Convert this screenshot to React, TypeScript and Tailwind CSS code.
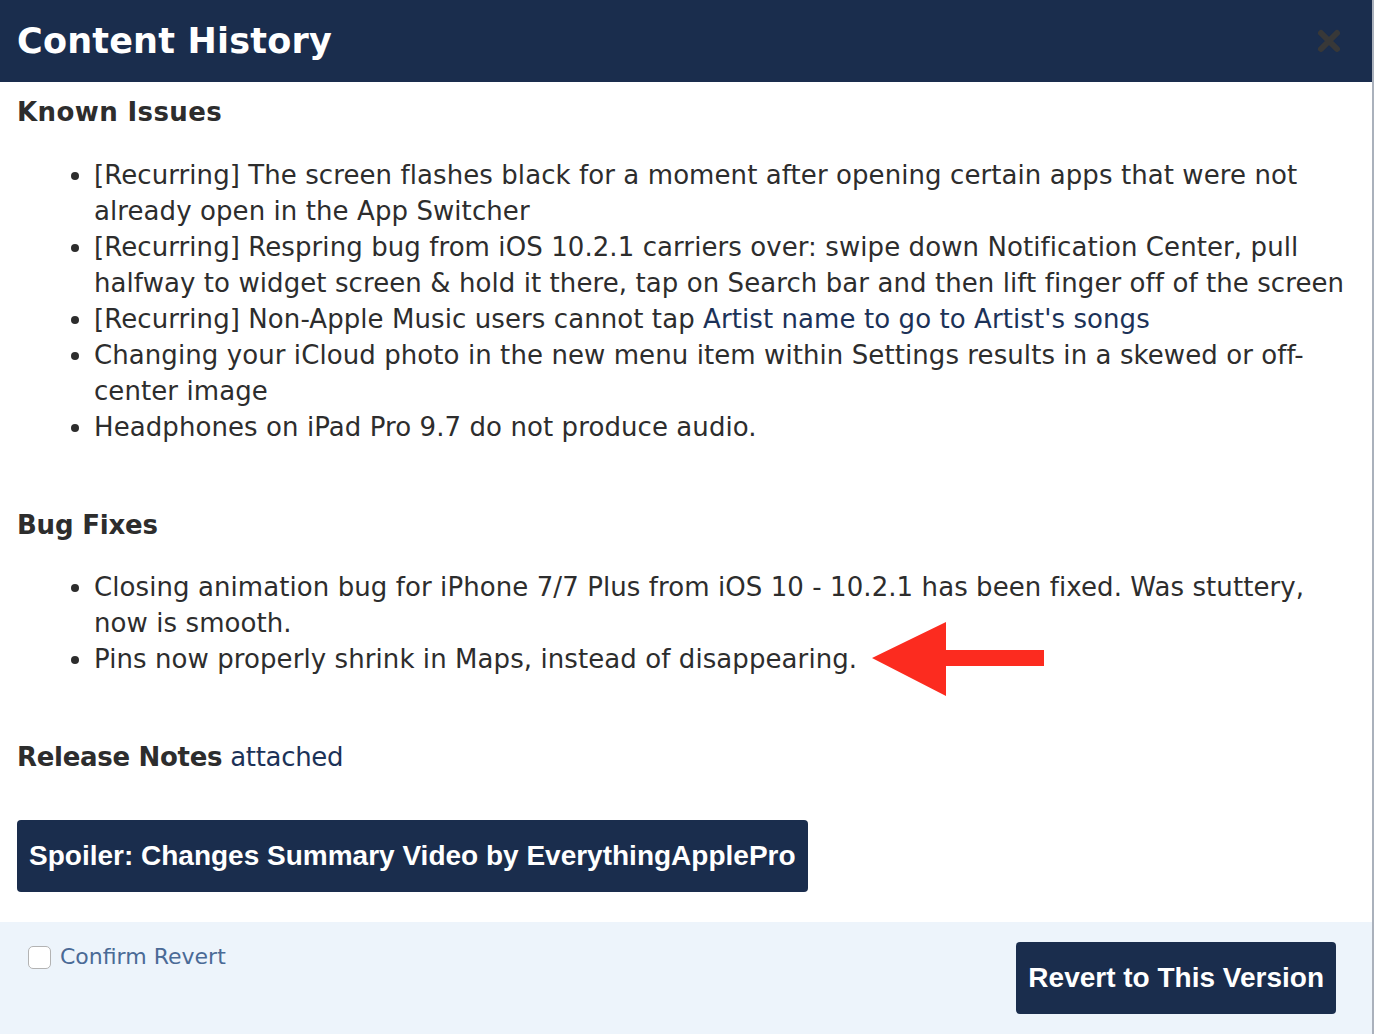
import { useState } from 'react';

const knownIssues = [
  '[Recurring] The screen flashes black for a moment after opening certain apps that were not already open in the App Switcher',
  '[Recurring] Respring bug from iOS 10.2.1 carriers over: swipe down Notification Center, pull halfway to widget screen & hold it there, tap on Search bar and then lift finger off of the screen',
];

function RedArrow() {
  return (
    <svg
      className="absolute left-full top-1/2 ml-[15px] -translate-y-1/2"
      width="172"
      height="74"
      viewBox="0 0 172 74"
    >
      <polygon points="0,36 74,0 74,28 172,28 172,44 74,44 74,74" fill="#fc2b1f" />
    </svg>
  );
}

export default function App() {
  const [confirmed, setConfirmed] = useState(false);

  return (
    <div className="flex min-h-screen bg-white">
      <div className="flex w-[1372px] flex-col font-['DejaVu_Sans',Verdana,sans-serif] text-[#2d2d2d]">
        {/* Cabecera */}
        <div className="flex h-[82px] items-center justify-between bg-[#1a2d4d] pl-[17px] pr-[30px]">
          <h1 className="text-[35px] font-bold leading-none tracking-[0.2px] text-white">Content History</h1>
          <button className="text-[#383838]">
            <svg width="26" height="26" viewBox="0 0 26 26">
              <path d="M5 5 L21 21 M21 5 L5 21" stroke="currentColor" strokeWidth="6" strokeLinecap="round" />
            </svg>
          </button>
        </div>

        {/* Contenido */}
        <div className="px-[17px] pt-[12px] text-[26px] leading-[36px] tracking-[0.08px]">
          <h3 className="font-bold tracking-[0.4px]">Known Issues</h3>
          <ul className="mt-[27px] list-disc pl-[77px]">
            {knownIssues.map((item) => (
              <li key={item}>{item}</li>
            ))}
            <li>
              [Recurring] Non-Apple Music users cannot tap{' '}
              <a className="text-[#1c3258]">Artist name to go to Artist's songs</a>
            </li>
            <li>Changing your iCloud photo in the new menu item within Settings results in a skewed or off-center image</li>
            <li>Headphones on iPad Pro 9.7 do not produce audio.</li>
          </ul>

          <h3 className="mt-[62px] font-bold tracking-[-0.2px]">Bug Fixes</h3>
          <ul className="mt-[26px] list-disc pl-[77px]">
            <li>Closing animation bug for iPhone 7/7 Plus from iOS 10 - 10.2.1 has been fixed. Was stuttery, now is smooth.</li>
            <li>
              <span className="relative">
                Pins now properly shrink in Maps, instead of disappearing.
                <RedArrow />
              </span>
            </li>
          </ul>

          <p className="mt-[62px] tracking-[-0.3px]">
            <span className="font-bold">Release Notes</span> <a className="text-[#1c3258]">attached</a>
          </p>

          <button className="mb-[30px] mt-[45px] h-[72px] rounded-[4px] bg-[#1a2d4d] px-[12px] font-['Liberation_Sans',Arial,sans-serif] text-[28px] font-bold tracking-normal text-white">
            Spoiler: Changes Summary Video by EverythingApplePro
          </button>
        </div>

        {/* Pie */}
        <div className="flex items-start justify-between bg-[#edf4fb] pb-[20px] pl-[28px] pr-[36px] pt-[20px]">
          <label className="-mt-[1px] flex items-center gap-[9px] text-[22px] leading-[32px] text-[#4a6a96]">
            <input
              type="checkbox"
              checked={confirmed}
              onChange={(e) => setConfirmed(e.target.checked)}
              className="h-[23px] w-[23px] appearance-none rounded-[5px] border border-[#b3b3b3] bg-white checked:bg-[#1a2d4d]"
            />
            Confirm Revert
          </label>
          <button className="h-[72px] rounded-[4px] bg-[#1a2d4d] px-[12px] font-['Liberation_Sans',Arial,sans-serif] text-[28px] font-bold text-white">
            Revert to This Version
          </button>
        </div>
      </div>
      <div className="w-[2px] bg-[#aab1bc]" />
    </div>
  );
}
